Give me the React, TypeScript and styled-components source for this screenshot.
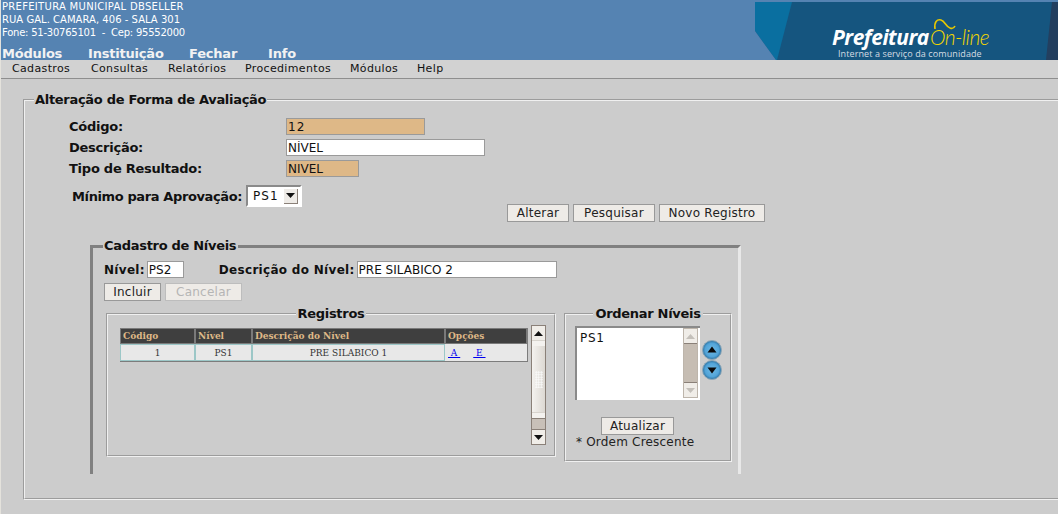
import React from "react";
import styled, { createGlobalStyle } from "styled-components";

const Global = createGlobalStyle`
  html, body { margin: 0; padding: 0; height: 514px; overflow: hidden; background: #cccccc; }
  body { font-family: "DejaVu Sans", sans-serif; color: #111; }
`;

const Page = styled.div`
  width: 1058px;
  height: 514px;
  overflow: hidden;
  border-left: 1px solid #e4e2dc;
  box-sizing: border-box;
  background: #cccccc;
`;
const Header = styled.header`
  height: 60px;
  margin-left: -1px;
  background: #5583b2;
  display: flex;
  justify-content: space-between;
`;
const Identity = styled.div`
  padding: 0 0 0 2px;
  color: #fff;
`;
const IdLine = styled.div<{ $track: number }>`
  font-size: 10px;
  line-height: 13px;
  white-space: pre;
  letter-spacing: ${(p) => p.$track}px;
`;
const TopMenu = styled.nav`
  display: flex;
  margin-top: 7px;
  color: #f2f2f2;
  font-size: 13px;
  font-weight: bold;
  line-height: 15px;
`;
const TopItem = styled.span<{ $w: number }>`
  width: ${(p) => p.$w}px;
  letter-spacing: -0.2px;
`;
const Banner = styled.div`
  position: relative;
  width: 303px;
  height: 58px;
  margin-top: 2px;
`;
const BannerArt = styled.svg`
  display: block;
`;
const BrandWhite = styled.span`
  position: absolute;
  left: 77px;
  top: 24px;
  font: italic bold 21px/22px "Open Sans", sans-serif;
  color: #fff;
  letter-spacing: -0.5px;
`;
const BrandYellow = styled.span`
  position: absolute;
  left: 175px;
  top: 24px;
  font: italic 300 21px/22px "Lato", sans-serif;
  color: #f2d500;
  letter-spacing: -0.6px;
`;
const BrandTag = styled.span`
  position: absolute;
  left: 83px;
  top: 46px;
  font: 9px/12px "Open Sans", sans-serif;
  color: #d5dde3;
  letter-spacing: 0.1px;
  white-space: nowrap;
`;
const MenuBar = styled.nav`
  height: 18px;
  display: flex;
  padding-left: 11px;
  font-size: 11px;
  line-height: 18px;
  letter-spacing: 0.35px;
  background: #d2d2d2;
  border-bottom: 1px solid #8e8e8e;
`;
const MenuItem = styled.span<{ $w: number }>`
  width: ${(p) => p.$w}px;
  flex: none;
`;
const Main = styled.main`
  padding: 13px 0 0 22px;
`;
const Group = styled.fieldset`
  margin: 0;
  padding: 0;
  min-width: 0;
  border: 2px groove #f0f0f0;
  box-sizing: border-box;
`;
const OuterGroup = styled(Group)`
  width: 1100px;
  height: 408px;
  padding-top: 10px;
`;
const Title = styled.legend`
  margin-left: 9px;
  padding: 0 1px;
  font-size: 13px;
  font-weight: bold;
  line-height: 16px;
  letter-spacing: -0.3px;
  color: #111;
`;
const InnerTitle = styled(Title)`
  margin-left: -1px;
  padding: 0 2px 0 1px;
`;
const FieldRow = styled.div`
  display: flex;
  align-items: center;
  height: 17px;
  margin: 0 0 4px 44px;
`;
const FieldLabel = styled.label`
  width: 217px;
  font-size: 13px;
  font-weight: bold;
  letter-spacing: -0.25px;
`;
const TextInput = styled.input<{ $w: number; $locked?: boolean; $track?: number }>`
  width: ${(p) => p.$w}px;
  height: 17px;
  box-sizing: border-box;
  padding: 1px 0 0 1px;
  border: 1px solid #9a9a9a;
  background: ${(p) => (p.$locked ? "#deb887" : "#fff")};
  font: 12px "DejaVu Sans", sans-serif;
  letter-spacing: ${(p) => p.$track ?? 0}px;
  color: #111;
  outline: none;
`;
const MinRow = styled.div`
  display: flex;
  align-items: center;
  margin: 8px 0 0 47px;
`;
const MinLabel = styled.label`
  font-size: 13px;
  font-weight: bold;
  letter-spacing: -0.38px;
  margin-right: 4px;
`;
const Select = styled.div`
  width: 56px;
  height: 22px;
  box-sizing: border-box;
  display: flex;
  justify-content: space-between;
  align-items: center;
  padding-left: 5px;
  background: #fff;
  border: 2px solid;
  border-color: #8a8a8a #fff #fff #8a8a8a;
  font-size: 12px;
  letter-spacing: 1px;
`;
const SelectButton = styled.span`
  width: 14px;
  height: 15px;
  margin-right: 2px;
  background: #eeebe7;
  border-right: 1px solid #8a8078;
  border-bottom: 1px solid #8a8078;
  box-sizing: border-box;
  display: flex;
  align-items: center;
  justify-content: center;
`;
const Caret = styled.svg`
  display: block;
`;
const Actions = styled.div`
  display: flex;
  gap: 4px;
  margin: -3px 0 0 482px;
`;
const Button = styled.button<{ $w: number; $off?: boolean }>`
  width: ${(p) => p.$w}px;
  height: 18px;
  padding: 0;
  box-sizing: border-box;
  border: 1px solid ${(p) => (p.$off ? "#bdbdbd" : "#999")};
  background: #eeebe7;
  color: ${(p) => (p.$off ? "#b5b5b5" : "#222")};
  font: 12px/16px "DejaVu Sans", sans-serif;
  letter-spacing: 0.25px;
`;
const Inner = styled(Group)`
  width: 651px;
  height: 236px;
  margin: 16px 0 0 65px;
  padding: 7px 0 0 11px;
  border-style: solid;
  border-width: 3px 3px 0 3px;
  border-color: #808080 #e8e8e8 transparent #808080;
`;
const LevelRow = styled.div`
  display: flex;
  align-items: center;
  height: 17px;
`;
const LevelLabel = styled.label<{ $l?: number }>`
  margin: 0 2px 0 ${(p) => p.$l ?? 0}px;
  font-size: 12px;
  font-weight: bold;
  letter-spacing: 0.3px;
`;
const ButtonRow = styled.div`
  display: flex;
  gap: 4px;
  margin-top: 5px;
`;
const Panels = styled.div`
  display: flex;
  align-items: flex-start;
  gap: 8px;
  margin: 5px 0 0 2px;
`;
const PanelTitle = styled.legend`
  margin: 0 auto;
  padding: 0 2px;
  font-size: 13px;
  font-weight: bold;
  line-height: 16px;
  letter-spacing: -0.3px;
`;
const RecordPanel = styled(Group)`
  width: 450px;
  height: 151px;
  padding: 3px 0 0 0;
`;
const RecordBody = styled.div`
  display: flex;
  align-items: flex-start;
  margin-left: 12px;
`;
const Table = styled.table`
  width: 407px;
  margin-top: 3px;
  border-collapse: separate;
  border-spacing: 0;
  table-layout: fixed;
  font-family: "DejaVu Serif", serif;
  border-right: 1px solid #7c7c7c;
  border-bottom: 1px solid #7c7c7c;
`;
const Head = styled.th<{ $w: number }>`
  width: ${(p) => p.$w}px;
  height: 16px;
  padding: 0 0 0 2px;
  box-sizing: border-box;
  text-align: left;
  background: #3f3f3f;
  color: #deb887;
  font-size: 9px;
  font-weight: bold;
  border: 1px solid #7a7a7a;
`;
const Cell = styled.td`
  height: 15px;
  padding: 0;
  text-align: center;
  background: #e8e8e8;
  color: #333;
  font-size: 9px;
  border: 1px solid #9cc7c7;
`;
const OptionCell = styled(Cell)`
  text-align: left;
  padding-left: 2px;
  border-color: #e8e8e8;
`;
const OptionLink = styled.a`
  color: #00e;
  text-decoration: underline;
  white-space: pre;
  margin-right: 13px;
`;
const Scroll = styled.div`
  width: 15px;
  height: 120px;
  margin: 0 0 0 3px;
  display: flex;
  flex-direction: column;
  box-sizing: border-box;
  border: 1px solid #8a8078;
  background: #c8c0b8;
`;
const ScrollEnd = styled.div`
  height: 14px;
  flex: none;
  display: flex;
  align-items: center;
  justify-content: center;
  background: #f0ede8;
`;
const ScrollGap = styled.div`
  height: 5px;
  flex: none;
  background: #f4f2ef;
  border-top: 1px solid #d8d4ce;
`;
const Thumb = styled.div`
  height: 66px;
  flex: none;
  display: flex;
  align-items: center;
  justify-content: center;
  background: linear-gradient(to right, #f4f2ef, #dcd8d2);
`;
const Grip = styled.div`
  width: 8px;
  height: 17px;
  background-image: radial-gradient(circle, #fafafa 0.8px, transparent 1px);
  background-size: 2.5px 2.5px;
`;
const Trough = styled.div`
  flex: 1;
  border-top: 1px solid #8a8078;
  border-bottom: 1px solid #8a8078;
`;
const OrderPanel = styled(RecordPanel)`
  width: 168px;
  height: 156px;
  padding: 4px 0 0 0;
`;
const OrderBody = styled.div`
  display: flex;
  align-items: flex-start;
  margin-left: 9px;
`;
const ListBox = styled.div`
  width: 125px;
  height: 74px;
  box-sizing: border-box;
  display: flex;
  justify-content: space-between;
  background: #fff;
  border-style: solid;
  border-width: 2px 0 0 2px;
  border-color: #8a8a8a;
`;
const ListItem = styled.div`
  padding: 3px 0 0 3px;
  font-size: 12px;
  letter-spacing: 0.7px;
`;
const ListScroll = styled.div`
  width: 15px;
  height: 70px;
  margin: 0 2px 0 0;
  display: flex;
  flex-direction: column;
  box-sizing: border-box;
  border: 1px solid #bdb5ab;
  background: #c6bdb3;
`;
const ListEnd = styled.div`
  height: 14px;
  flex: none;
  display: flex;
  align-items: center;
  justify-content: center;
  background: #f0ede8;
`;
const RoundStack = styled.div`
  display: flex;
  flex-direction: column;
  margin: 14px 0 0 2px;
`;
const Round = styled.svg`
  display: block;
`;
const UpdateRow = styled.div`
  margin: 15px 0 0 35px;
`;
const Note = styled.div`
  margin: 0 0 0 10px;
  font-size: 12px;
  letter-spacing: 0.2px;
  color: #222;
`;

const Arrow = ({ up, color = "#111" }: { up?: boolean; color?: string }) => (
  <Caret width="9" height="5" viewBox="0 0 9 5">
    <path d={up ? "M4.5 0 L9 5 L0 5 Z" : "M0 0 L9 0 L4.5 5 Z"} fill={color} />
  </Caret>
);

const RoundButton = ({ id, up }: { id: string; up?: boolean }) => (
  <Round width="20" height="20" viewBox="0 0 20 20">
    <defs>
      <radialGradient id={id} cx="50%" cy="50%" r="55%">
        <stop offset="0%" stopColor="#6fb9e4" />
        <stop offset="65%" stopColor="#52a4d8" />
        <stop offset="100%" stopColor="#1f5f8c" />
      </radialGradient>
    </defs>
    <circle cx="10" cy="10" r="9.5" fill={`url(#${id})`} stroke="#8fa8b8" strokeWidth="1" />
    <path d={up ? "M10 6.5 L14.5 12.5 L5.5 12.5 Z" : "M5.5 7.5 L14.5 7.5 L10 13.5 Z"} fill="#0a0a0a" />
  </Round>
);

export default function App() {
  return (
    <Page>
      <Global />
      <Header>
        <Identity>
          <IdLine $track={0.3}>PREFEITURA MUNICIPAL DBSELLER</IdLine>
          <IdLine $track={0.03}>RUA GAL. CAMARA, 406 - SALA 301</IdLine>
          <IdLine $track={-0.23}>{"Fone: 51-30765101  -  Cep: 95552000"}</IdLine>
          <TopMenu>
            <TopItem $w={86}>Módulos</TopItem>
            <TopItem $w={101}>Instituição</TopItem>
            <TopItem $w={79}>Fechar</TopItem>
            <TopItem $w={40}>Info</TopItem>
          </TopMenu>
        </Identity>
        <Banner>
          <BannerArt width="303" height="58" viewBox="0 0 303 58">
            <rect width="303" height="58" fill="#15557f" />
            <path d="M0 0 H37 L22 58 L21 58 L0 29 Z" fill="#0a6fa0" />
            <path d="M0 29 L21 58 H0 Z" fill="#5583b2" />
            <path d="M297 0 H303 V58 H291 Z" fill="#233f5f" />
            <path d="M180 27 C179 20 182 17 186 18 C190 19 191 25 195 26 C197 27 199 26 200 24" fill="none" stroke="#e8c800" strokeWidth="1.6" />
          </BannerArt>
          <BrandWhite>Prefeitura</BrandWhite>
          <BrandYellow>On-line</BrandYellow>
          <BrandTag>Internet a serviço da comunidade</BrandTag>
        </Banner>
      </Header>
      <MenuBar>
        <MenuItem $w={79}>Cadastros</MenuItem>
        <MenuItem $w={77}>Consultas</MenuItem>
        <MenuItem $w={77}>Relatórios</MenuItem>
        <MenuItem $w={105}>Procedimentos</MenuItem>
        <MenuItem $w={67}>Módulos</MenuItem>
        <MenuItem $w={30}>Help</MenuItem>
      </MenuBar>
      <Main>
        <OuterGroup as="fieldset">
          <Title>Alteração de Forma de Avaliação</Title>
          <FieldRow>
            <FieldLabel>Código:</FieldLabel>
            <TextInput $w={139} $locked $track={1} readOnly value="12" />
          </FieldRow>
          <FieldRow>
            <FieldLabel>Descrição:</FieldLabel>
            <TextInput $w={199} readOnly value="NÍVEL" />
          </FieldRow>
          <FieldRow>
            <FieldLabel>Tipo de Resultado:</FieldLabel>
            <TextInput $w={73} $locked readOnly value="NIVEL" />
          </FieldRow>
          <MinRow>
            <MinLabel>Mínimo para Aprovação:</MinLabel>
            <Select>
              PS1
              <SelectButton>
                <Arrow />
              </SelectButton>
            </Select>
          </MinRow>
          <Actions>
            <Button $w={62}>Alterar</Button>
            <Button $w={82}>Pesquisar</Button>
            <Button $w={106}>Novo Registro</Button>
          </Actions>
          <Inner as="fieldset">
            <InnerTitle>Cadastro de Níveis</InnerTitle>
            <LevelRow>
              <LevelLabel>Nível:</LevelLabel>
              <TextInput $w={37} readOnly value="PS2" />
              <LevelLabel $l={35}>Descrição do Nível:</LevelLabel>
              <TextInput $w={200} readOnly value="PRE SILABICO 2" />
            </LevelRow>
            <ButtonRow>
              <Button $w={57}>Incluir</Button>
              <Button $w={77} $off>
                Cancelar
              </Button>
            </ButtonRow>
            <Panels>
              <RecordPanel as="fieldset">
                <PanelTitle>Registros</PanelTitle>
                <RecordBody>
                  <Table>
                    <thead>
                      <tr>
                        <Head $w={75}>Código</Head>
                        <Head $w={57}>Nível</Head>
                        <Head $w={193}>Descrição do Nível</Head>
                        <Head $w={82}>Opções</Head>
                      </tr>
                    </thead>
                    <tbody>
                      <tr>
                        <Cell>1</Cell>
                        <Cell>PS1</Cell>
                        <Cell>PRE SILABICO 1</Cell>
                        <OptionCell>
                          <OptionLink href="#a">{" A "}</OptionLink>
                          <OptionLink href="#e">{" E "}</OptionLink>
                        </OptionCell>
                      </tr>
                    </tbody>
                  </Table>
                  <Scroll>
                    <ScrollEnd>
                      <Arrow up />
                    </ScrollEnd>
                    <ScrollGap />
                    <Thumb>
                      <Grip />
                    </Thumb>
                    <ScrollGap />
                    <Trough />
                    <ScrollEnd>
                      <Arrow />
                    </ScrollEnd>
                  </Scroll>
                </RecordBody>
              </RecordPanel>
              <OrderPanel as="fieldset">
                <PanelTitle>Ordenar Níveis</PanelTitle>
                <OrderBody>
                  <ListBox>
                    <ListItem>PS1</ListItem>
                    <ListScroll>
                      <ListEnd>
                        <Arrow up color="#c4c0ba" />
                      </ListEnd>
                      <Trough />
                      <ListEnd>
                        <Arrow color="#c4c0ba" />
                      </ListEnd>
                    </ListScroll>
                  </ListBox>
                  <RoundStack>
                    <RoundButton id="r-up" up />
                    <RoundButton id="r-down" />
                  </RoundStack>
                </OrderBody>
                <UpdateRow>
                  <Button $w={73}>Atualizar</Button>
                </UpdateRow>
                <Note>* Ordem Crescente</Note>
              </OrderPanel>
            </Panels>
          </Inner>
        </OuterGroup>
      </Main>
    </Page>
  );
}
